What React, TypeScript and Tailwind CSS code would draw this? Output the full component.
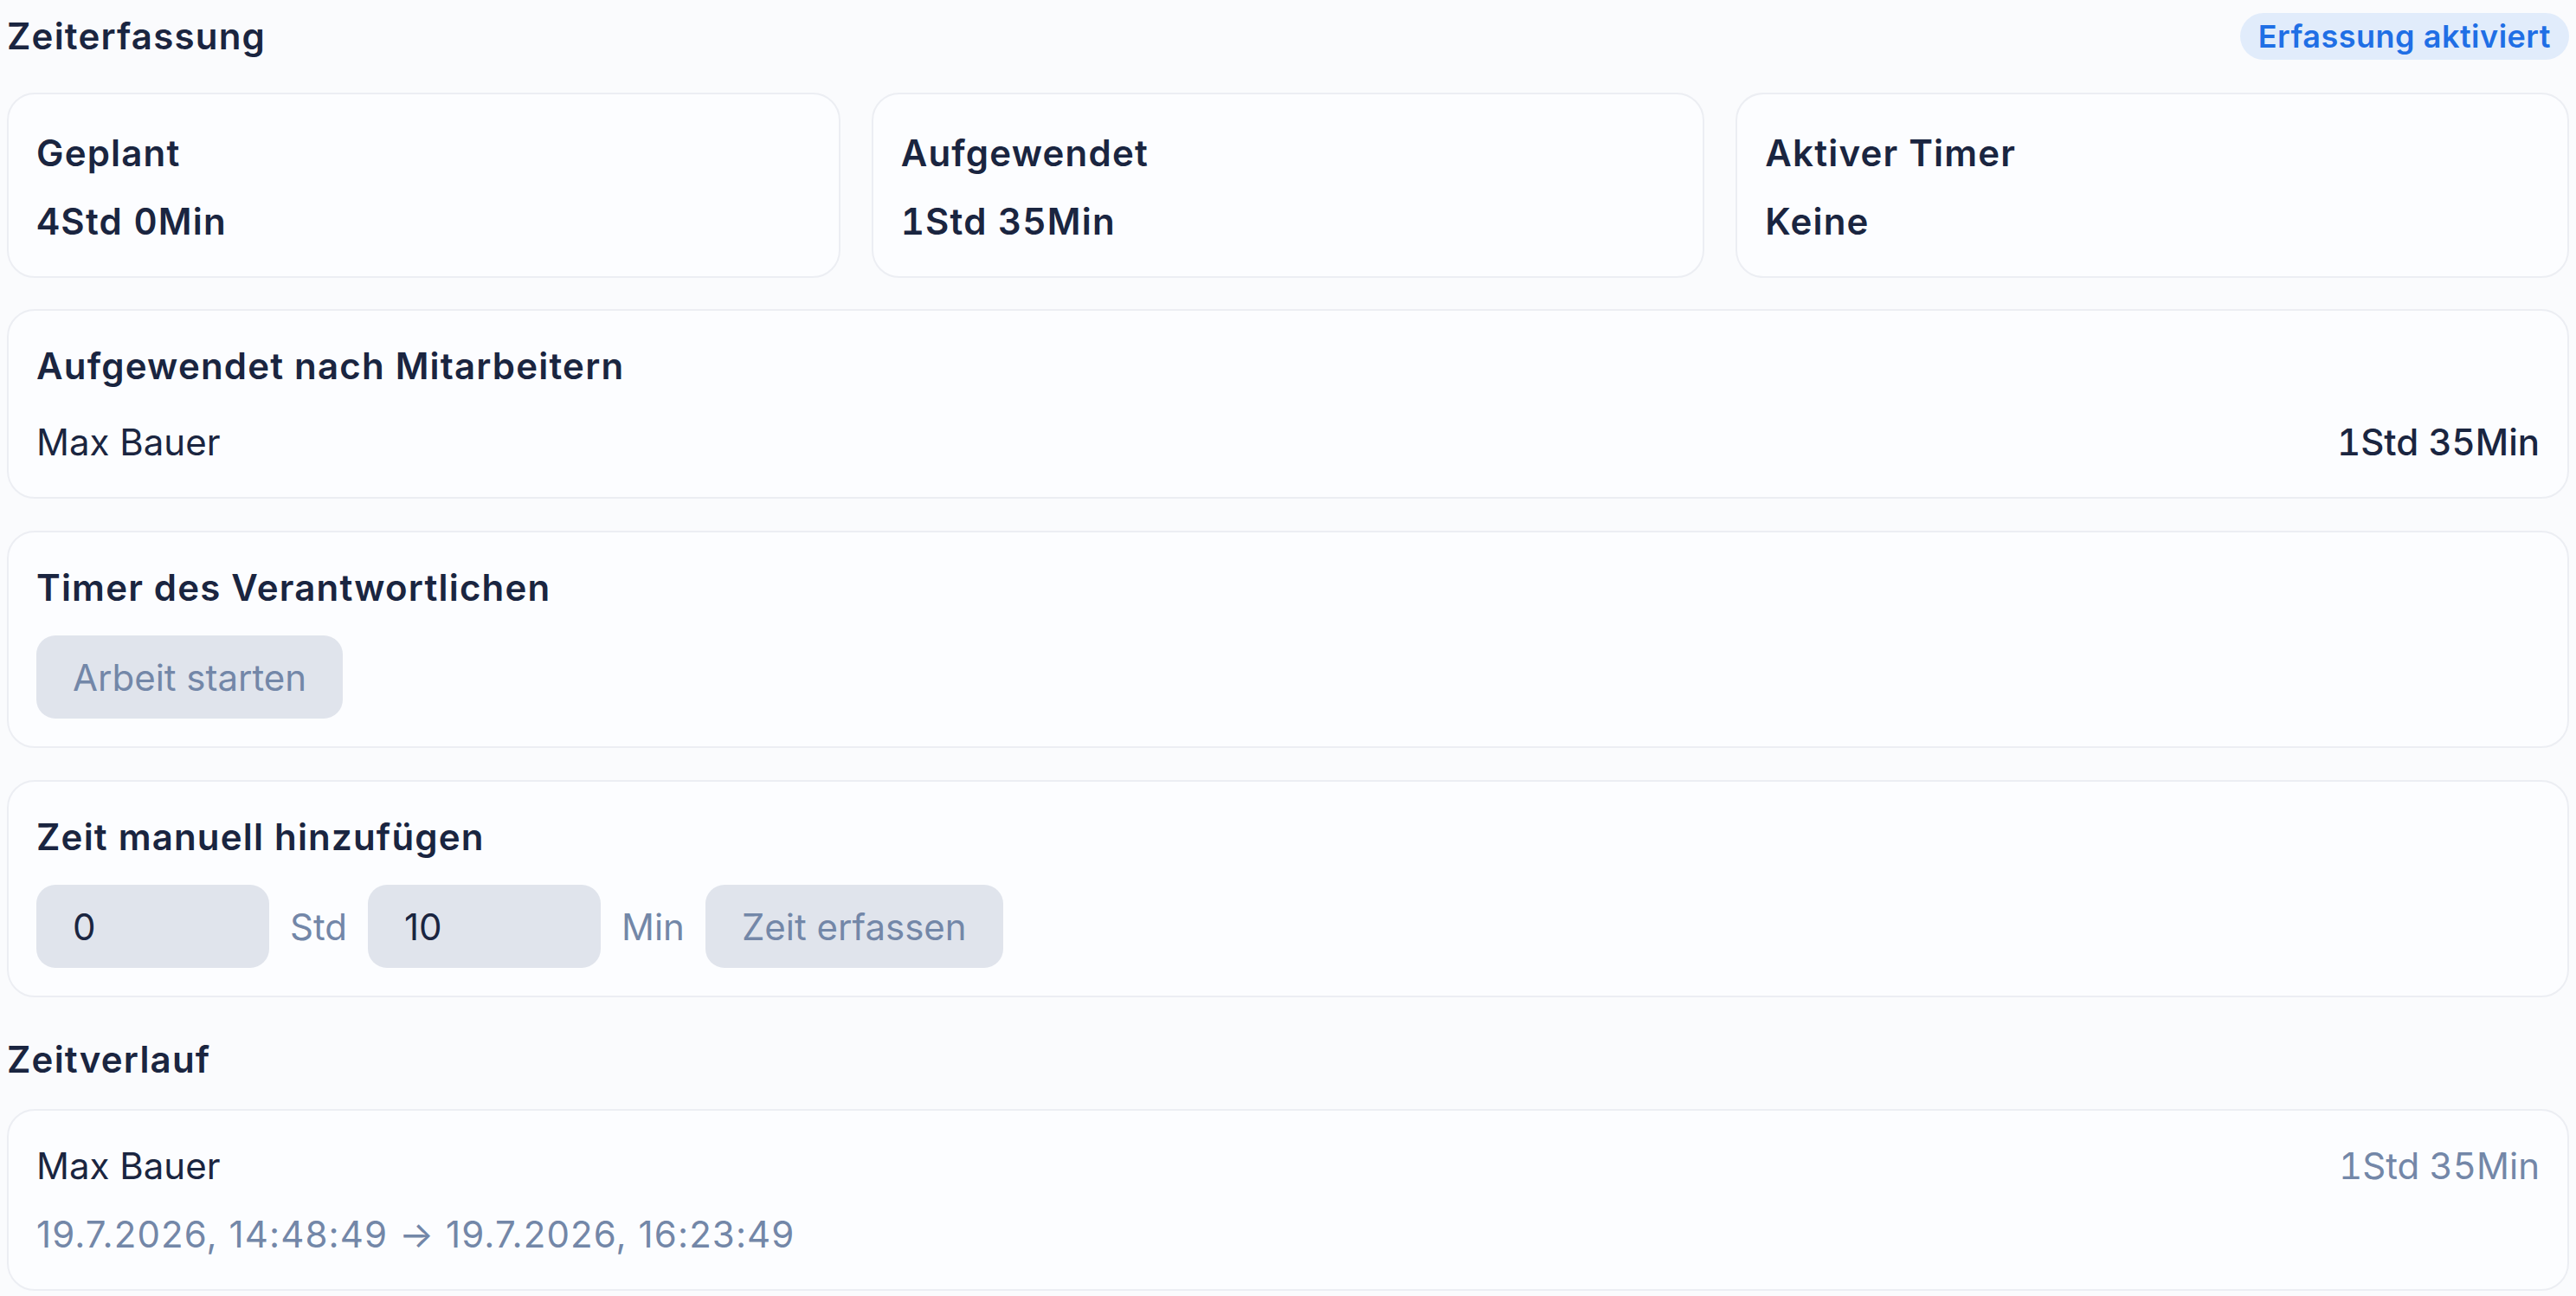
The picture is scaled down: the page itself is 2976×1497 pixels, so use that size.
import { useState } from "react";

type Stat = {
  label: string;
  value: string;
};

type Entry = {
  name: string;
  start: string;
  end: string;
  duration: string;
};

const stats: Stat[] = [
  { label: "Geplant", value: "4Std 0Min" },
  { label: "Aufgewendet", value: "1Std 35Min" },
  { label: "Aktiver Timer", value: "Keine" },
];

const perEmployee = [{ name: "Max Bauer", duration: "1Std 35Min" }];

const entries: Entry[] = [
  {
    name: "Max Bauer",
    start: "19.7.2026, 14:48:49",
    end: "19.7.2026, 16:23:49",
    duration: "1Std 35Min",
  },
];

const cardClass = "rounded-[32px] border-2 border-[#eceef3] bg-[#fcfdff]";
const titleClass = "text-[42px] font-semibold leading-[63px] tracking-[1.2px] text-[#1a2540]";
const softControl = "h-[96px] rounded-[22px] bg-[#e0e4ec] px-[42px] text-[42px] leading-[63px]";

function StatCard({ label, value }: Stat) {
  return (
    <div className={`${cardClass} flex flex-col gap-[16px] px-[32px] pb-[32px] pt-[36px]`}>
      <span className={titleClass}>{label}</span>
      <span className={`${titleClass} tabular-nums`}>{value}</span>
    </div>
  );
}

function ManualEntry() {
  const [hours, setHours] = useState("0");
  const [minutes, setMinutes] = useState("10");

  return (
    <section className={`${cardClass} flex flex-col gap-[24px] p-[32px]`}>
      <h3 className={titleClass}>Zeit manuell hinzufügen</h3>
      <div className="flex items-center gap-[24px]">
        <input
          className={`${softControl} w-[269px] text-[#1a2540] focus:outline-none`}
          onChange={(event) => setHours(event.target.value)}
          type="text"
          value={hours}
        />
        <span className="text-[42px] leading-[63px] text-[#7387a8]">Std</span>
        <input
          className={`${softControl} w-[269px] text-[#1a2540] focus:outline-none`}
          onChange={(event) => setMinutes(event.target.value)}
          type="text"
          value={minutes}
        />
        <span className="text-[42px] leading-[63px] text-[#7387a8]">Min</span>
        <button className={`${softControl} text-[#7387a8]`} disabled type="button">
          Zeit erfassen
        </button>
      </div>
    </section>
  );
}

export default function App() {
  return (
    <div className="min-h-screen bg-[#fafbfd] px-[8px] pt-[10px] font-['Inter','Noto_Sans',sans-serif] text-[#1a2540]">
      <header className="mb-[34px] flex items-center justify-between">
        <h2 className={titleClass}>Zeiterfassung</h2>
        <span className="flex h-[54px] items-center rounded-full bg-[#e1ecfb] px-[21px] text-[36px] font-semibold tracking-[0.5px] text-[#1f6fe5]">
          Erfassung aktiviert
        </span>
      </header>

      <div className="grid grid-cols-3 gap-[36px]">
        {stats.map((stat) => (
          <StatCard key={stat.label} {...stat} />
        ))}
      </div>

      <div className="mt-[36px] flex flex-col gap-[37px]">
        <section className={`${cardClass} flex flex-col gap-[25px] p-[32px]`}>
          <h3 className={titleClass}>Aufgewendet nach Mitarbeitern</h3>
          {perEmployee.map((row) => (
            <div className="flex items-center justify-between text-[42px] leading-[63px]" key={row.name}>
              <span>{row.name}</span>
              <span className="font-medium tabular-nums">{row.duration}</span>
            </div>
          ))}
        </section>

        <section className={`${cardClass} flex flex-col items-start gap-[24px] p-[32px]`}>
          <h3 className={titleClass}>Timer des Verantwortlichen</h3>
          <button className={`${softControl} text-[#7387a8]`} disabled type="button">
            Arbeit starten
          </button>
        </section>

        <ManualEntry />
      </div>

      <h2 className={`${titleClass} mb-[26px] mt-[40px]`}>Zeitverlauf</h2>

      {entries.map((entry) => (
        <div className={`${cardClass} flex flex-col gap-[16px] p-[32px]`} key={entry.start}>
          <div className="flex items-center justify-between text-[42px] leading-[63px]">
            <span>{entry.name}</span>
            <span className="tabular-nums text-[#7387a8]">{entry.duration}</span>
          </div>
          <span className="text-[42px] leading-[63px] tracking-[1.1px] text-[#7387a8]">
            {entry.start} → {entry.end}
          </span>
        </div>
      ))}
    </div>
  );
}
